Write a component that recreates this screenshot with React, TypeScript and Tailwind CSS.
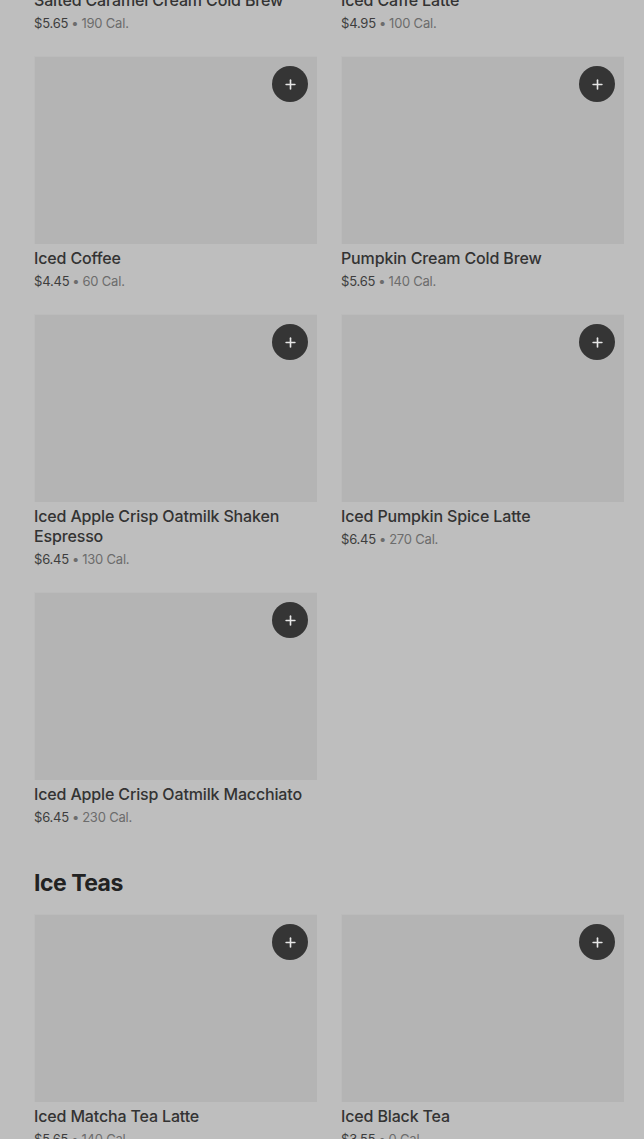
import { Plus } from "lucide-react";

type Item = { name: string; price: string; cal: string };

const drinks: Item[] = [
  { name: "Salted Caramel Cream Cold Brew", price: "$5.65", cal: "190 Cal." },
  { name: "Iced Caffè Latte", price: "$4.95", cal: "100 Cal." },
  { name: "Iced Coffee", price: "$4.45", cal: "60 Cal." },
  { name: "Pumpkin Cream Cold Brew", price: "$5.65", cal: "140 Cal." },
  { name: "Iced Apple Crisp Oatmilk Shaken Espresso", price: "$6.45", cal: "130 Cal." },
  { name: "Iced Pumpkin Spice Latte", price: "$6.45", cal: "270 Cal." },
  { name: "Iced Apple Crisp Oatmilk Macchiato", price: "$6.45", cal: "230 Cal." },
];

const teas: Item[] = [
  { name: "Iced Matcha Tea Latte", price: "$5.65", cal: "140 Cal." },
  { name: "Iced Black Tea", price: "$3.55", cal: "0 Cal." },
];

function Card({ item }: { item: Item }) {
  return (
    <div className="flex flex-col">
      <div className="relative h-[188px] bg-[#b4b4b4] border-t border-l border-[#bbbbbb]">
        <button className="absolute top-[9px] right-[9px] w-9 h-9 rounded-full bg-[#353535] flex items-center justify-center">
          <Plus className="w-[15px] h-[15px] text-[#e6e6e6]" strokeWidth={2.6} />
        </button>
      </div>
      <div className="mt-1 text-[16px] leading-5 font-medium text-[#333333] tracking-[-0.15px]">{item.name}</div>
      <div className="mt-1 text-[13px] leading-[18px] text-[#6c6c6c] tracking-[-0.2px]">
        <span className="text-[#3d3d3d]">{item.price}</span>
        <span className="mx-[3px]">•</span>
        {item.cal}
      </div>
    </div>
  );
}

export default function App() {
  return (
    <main
      className="min-h-screen bg-[#bebebe] pl-[34px] pr-[20px] overflow-hidden"
      style={{ fontFamily: "Inter, 'Noto Sans', sans-serif" }}
    >
      <section className="-mt-[202px] grid grid-cols-2 gap-x-6 gap-y-6">
        {drinks.map((d) => (
          <Card key={d.name} item={d} />
        ))}
      </section>
      <h2 className="mt-[41px] text-[23px] leading-8 font-bold text-[#222222] tracking-[-0.5px]">Ice Teas</h2>
      <section className="mt-[15px] grid grid-cols-2 gap-x-6 gap-y-6 pb-10">
        {teas.map((d) => (
          <Card key={d.name} item={d} />
        ))}
      </section>
    </main>
  );
}
